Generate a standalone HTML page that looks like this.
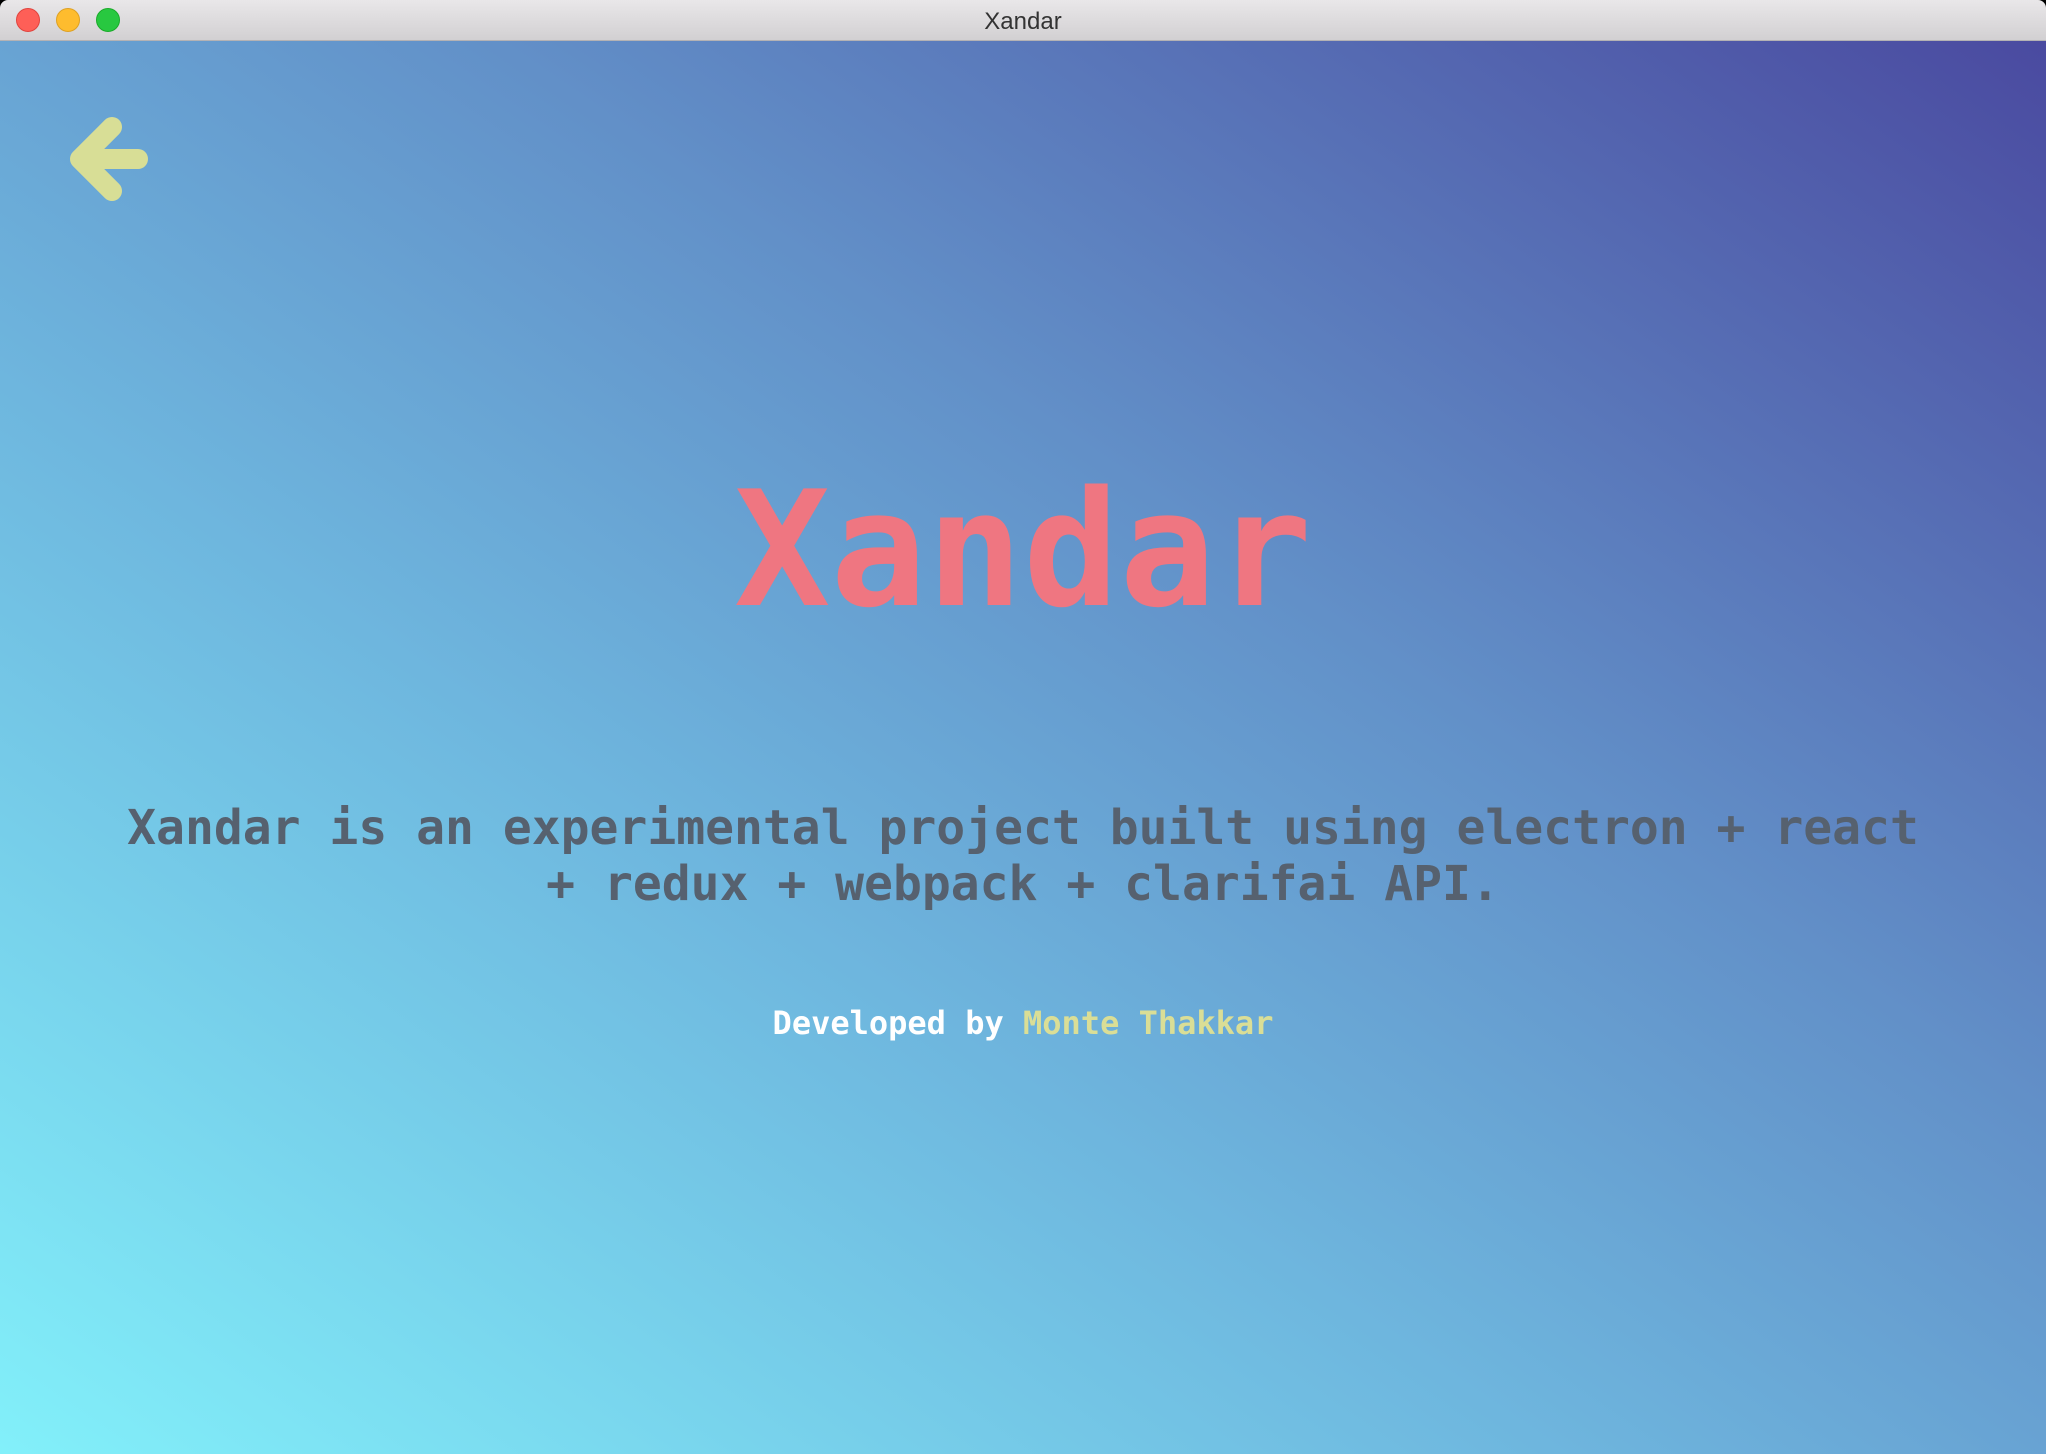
<!DOCTYPE html>
<html><head><meta charset="utf-8"><style>
*{margin:0;padding:0;box-sizing:border-box}
html,body{width:2046px;height:1454px;overflow:hidden;background:#000}
.tb{position:absolute;left:0;top:0;width:2046px;height:41px;background:linear-gradient(#e9e7e9,#d2d0d2);border-bottom:1px solid #b4b2b4;border-radius:8px 8px 0 0}
.tb .t{position:absolute;left:0;right:0;top:8px;text-align:center;font:24px "Liberation Sans",sans-serif;color:#333}
.dot{position:absolute;top:8px;width:24px;height:24px;border-radius:50%}
.main{position:absolute;left:0;top:41px;width:2046px;height:1413px;background:linear-gradient(to top right,#82f0fa 0%,#6eb6de 38%,#6290c8 62%,#4a4aa0 100%)}
.mono{font-family:"DejaVu Sans Mono","Liberation Mono",monospace;font-weight:bold;text-align:center;position:absolute;left:0;width:2046px;white-space:nowrap}
</style></head><body>
<div class="tb">
<div class="dot" style="left:16px;background:#fe5f57;border:1px solid #e0443e"></div>
<div class="dot" style="left:56px;background:#febc2e;border:1px solid #dea123"></div>
<div class="dot" style="left:96px;background:#28c840;border:1px solid #1aab29"></div>
<div class="t">Xandar</div>
</div>
<div class="main">
<svg style="position:absolute;left:60px;top:68px" width="100" height="100" viewBox="60 68 100 100">
<path d="M112 86 L80 118 L112 150 M80 118 L138 118" fill="none" stroke="#d8de96" stroke-width="20" stroke-linecap="round" stroke-linejoin="round"/>
</svg>
<div class="mono" style="top:414px;font-size:160px;line-height:190px;color:#ef7681">Xandar</div>
<div class="mono" style="top:759px;font-size:48px;line-height:56px;color:#56616f">Xandar is an experimental project built using electron + react<br>+ redux + webpack + clarifai API.</div>
<div class="mono" style="top:962px;font-size:32px;line-height:40px;color:#fff">Developed by <span style="color:#dade96">Monte Thakkar</span></div>
</div>
</body></html>
